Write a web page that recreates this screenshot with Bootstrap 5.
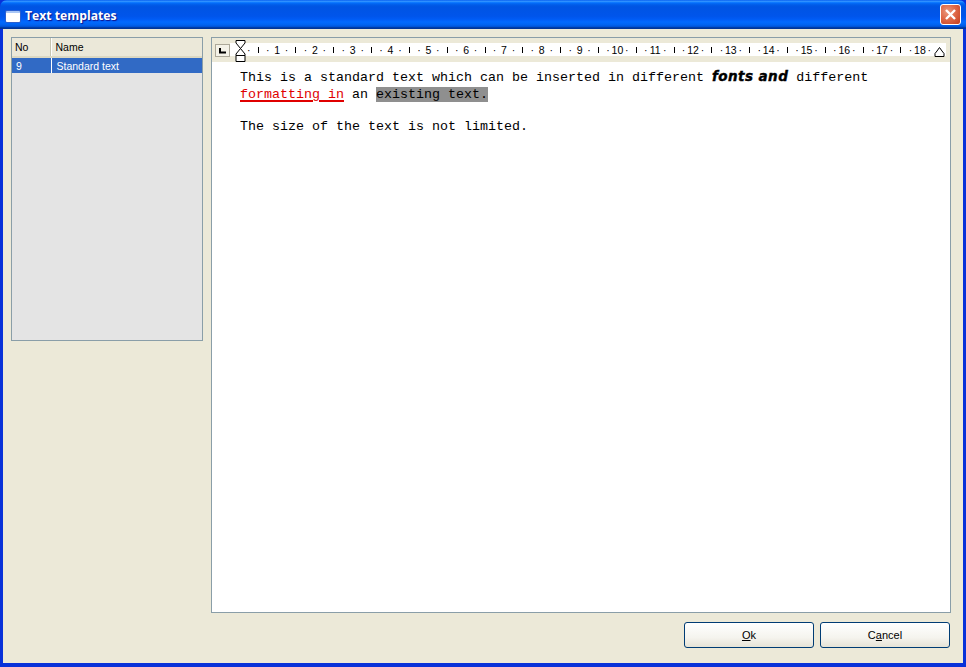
<!DOCTYPE html>
<html lang="en">
<head>
<meta charset="utf-8">
<title>Text templates</title>
<link href="https://cdn.jsdelivr.net/npm/bootstrap@5.3.0/dist/css/bootstrap.min.css" rel="stylesheet">
<style>
html,body{height:100%;margin:0}
body{background:#0831d9;font-family:"Liberation Sans",sans-serif;font-size:11px;color:#000;overflow:hidden}
.xp-window{width:966px;height:667px;background:#0831d9;border-radius:7px 7px 0 0;overflow:hidden}
.xp-title{height:29px;padding:3px 4px 0 6px;background:linear-gradient(180deg,#0058ee 0,#3593ff 4%,#288eff 6%,#127dff 8%,#036ffc 10%,#0262ee 14%,#0057e5 20%,#0054e3 24%,#0055eb 56%,#005bf5 66%,#026afe 76%,#0062ef 86%,#0052d6 92%,#0040ab 94%,#003092 100%)}
.xp-title-text{font-family:"Open Sans",sans-serif;font-weight:700;font-size:12.2px;color:#fff;text-shadow:1px 1px 1px #0f1089;margin-left:5px}
.xp-appicon{width:14px;height:11px;background:#fff;border-top:2px solid #a9c6f5;border-radius:1px;box-shadow:0 0 0 1px #2a5fd0}
.xp-close{width:21px;height:21px;margin-top:-4px;margin-right:1px;border:1px solid #fff;border-radius:3px;background:radial-gradient(circle at 35% 35%,#ea9a80 0,#df6a49 45%,#c53c1c 100%)}
.xp-client{flex:1 1 0;min-height:0;margin:0 3px 4px 3px;background:#ece9d8;padding:8px 12px 15px 8px}
.xp-leftpane{width:192px;height:304px;border:1px solid #8a9ea8;background:#e4e4e4;flex:none}
.xp-grid{width:100%;margin:0;font-size:10.5px;border-collapse:collapse;table-layout:fixed}
.xp-grid th{height:19px;padding:2px 0 1px 3px;font-weight:400;line-height:15px;background:#ebe8d9;border-bottom:2px solid #dcd8c2;border-right:1px solid #fff;box-shadow:inset -1px 0 0 #c7c5b2}
.xp-grid td{height:15px;padding:1px 0 0 4px;color:#fff;background:#316ac5;border-right:1px solid #fff;line-height:14px}
.xp-grid th+th{padding-left:4px}
.xp-grid td+td{padding-left:5px}
.xp-grid .xp-c1{width:39px}
.xp-grid tr>*:last-child{border-right:0;box-shadow:none}
.xp-editor{flex:1 1 0;min-width:0;border:1px solid #8a9ea8;background:#fff}
.xp-ruler{height:24px;background:#ece9d8;padding:5px 0 5px 3px;position:relative;flex:none}
.xp-tabbtn{width:15px;height:13px;background:#f4f2e8;border:1px solid #aca899;margin-top:1px;flex:none;position:relative;z-index:1}
.xp-strip{flex:1 1 0;height:13px;background:#fff;padding-left:14px;font-size:10.5px;line-height:14px;color:#000;margin-top:0;overflow:hidden;margin-right:4px}
.xp-u{width:9.455px;flex:none;text-align:center;white-space:nowrap;display:flex;justify-content:center}
.xp-bar{display:block;width:1px;height:6px;background:#000;margin-top:4px}
.xp-m1{position:absolute;left:23px;top:2px}
.xp-m2{position:absolute;left:722px;top:9px}
.xp-doc{flex:1 1 0;padding:6px 28px;font-family:"Liberation Mono",monospace;font-size:13.33px;line-height:17px;color:#000}
.xp-doc p{margin:0 0 15px;white-space:nowrap}
.xp-heavy{font-family:"DejaVu Sans",sans-serif;font-weight:700;font-style:italic;font-size:13.5px;letter-spacing:.45px;-webkit-text-stroke:.4px #000}
.xp-red{color:#e00000;text-decoration-line:underline;text-decoration-color:#e00000;text-decoration-thickness:2px;text-underline-offset:2px}
.xp-hl{background:#8f8f8f}
.xp-btn{width:130px;height:26px;padding:0;font-family:"Liberation Sans",sans-serif;font-size:11px;line-height:24px;color:#000;background:linear-gradient(180deg,#fff 0,#f5f4ee 60%,#e6e3d6 100%);border:1px solid #003c74;border-radius:3px}
.xp-btn:hover{background:#f5f4ee;color:#000;border-color:#003c74}
.xp-foot{padding-top:9px;padding-right:1px;gap:6px}
</style>
</head>
<body>
<div class="xp-window d-flex flex-column">
  <div class="xp-title d-flex align-items-center flex-none">
    <span class="xp-appicon d-block"></span>
    <span class="xp-title-text flex-grow-1">Text templates</span>
    <span class="xp-close d-flex align-items-center justify-content-center">
      <svg width="13" height="13" viewBox="0 0 13 13"><path d="M2 2 L11 11 M11 2 L2 11" stroke="#fff" stroke-width="2.4" fill="none"/></svg>
    </span>
  </div>
  <div class="xp-client d-flex flex-column">
    <div class="d-flex flex-grow-1 gap-2" style="min-height:0">
      <div class="xp-leftpane">
        <table class="xp-grid">
          <thead><tr><th class="xp-c1">No</th><th>Name</th></tr></thead>
          <tbody><tr><td>9</td><td>Standard text</td></tr></tbody>
        </table>
      </div>
      <div class="xp-editor d-flex flex-column">
        <div class="xp-ruler d-flex">
          <span class="xp-tabbtn d-flex align-items-center justify-content-center">
            <svg width="7" height="6" viewBox="0 0 7 6"><path d="M1 0V4.500H7" stroke="#000" stroke-width="2" fill="none"/></svg>
          </span>
          <div class="xp-strip d-flex">
            <span class="xp-u">·</span><span class="xp-u"><i class="xp-bar"></i></span><span class="xp-u">·</span><span class="xp-u">1</span>
            <span class="xp-u">·</span><span class="xp-u"><i class="xp-bar"></i></span><span class="xp-u">·</span><span class="xp-u">2</span>
            <span class="xp-u">·</span><span class="xp-u"><i class="xp-bar"></i></span><span class="xp-u">·</span><span class="xp-u">3</span>
            <span class="xp-u">·</span><span class="xp-u"><i class="xp-bar"></i></span><span class="xp-u">·</span><span class="xp-u">4</span>
            <span class="xp-u">·</span><span class="xp-u"><i class="xp-bar"></i></span><span class="xp-u">·</span><span class="xp-u">5</span>
            <span class="xp-u">·</span><span class="xp-u"><i class="xp-bar"></i></span><span class="xp-u">·</span><span class="xp-u">6</span>
            <span class="xp-u">·</span><span class="xp-u"><i class="xp-bar"></i></span><span class="xp-u">·</span><span class="xp-u">7</span>
            <span class="xp-u">·</span><span class="xp-u"><i class="xp-bar"></i></span><span class="xp-u">·</span><span class="xp-u">8</span>
            <span class="xp-u">·</span><span class="xp-u"><i class="xp-bar"></i></span><span class="xp-u">·</span><span class="xp-u">9</span>
            <span class="xp-u">·</span><span class="xp-u"><i class="xp-bar"></i></span><span class="xp-u">·</span><span class="xp-u">10</span>
            <span class="xp-u">·</span><span class="xp-u"><i class="xp-bar"></i></span><span class="xp-u">·</span><span class="xp-u">11</span>
            <span class="xp-u">·</span><span class="xp-u"><i class="xp-bar"></i></span><span class="xp-u">·</span><span class="xp-u">12</span>
            <span class="xp-u">·</span><span class="xp-u"><i class="xp-bar"></i></span><span class="xp-u">·</span><span class="xp-u">13</span>
            <span class="xp-u">·</span><span class="xp-u"><i class="xp-bar"></i></span><span class="xp-u">·</span><span class="xp-u">14</span>
            <span class="xp-u">·</span><span class="xp-u"><i class="xp-bar"></i></span><span class="xp-u">·</span><span class="xp-u">15</span>
            <span class="xp-u">·</span><span class="xp-u"><i class="xp-bar"></i></span><span class="xp-u">·</span><span class="xp-u">16</span>
            <span class="xp-u">·</span><span class="xp-u"><i class="xp-bar"></i></span><span class="xp-u">·</span><span class="xp-u">17</span>
            <span class="xp-u">·</span><span class="xp-u"><i class="xp-bar"></i></span><span class="xp-u">·</span><span class="xp-u">18</span>
            <span class="xp-u">·</span>
          </div>
          <svg class="xp-m1" width="11" height="23" viewBox="0 0 11 23"><path d="M1 .5H10V3L5.500 8.500 10 14V15.500H1V14L5.500 8.500 1 3Z M1 15.500H10V21.500H1Z" fill="#fff" stroke="#000"/></svg>
          <svg class="xp-m2" width="11" height="10" viewBox="0 0 11 10"><path d="M5.500 .5 8 4 10 6.500V9.500H1V6.500L3 4Z" fill="#fff" stroke="#000"/></svg>
        </div>
        <div class="xp-doc">
          <p>This is a standard text which can be inserted in different <span class="xp-heavy">fonts and</span> different<br><span class="xp-red">formatting in</span> an <span class="xp-hl">existing text.</span></p>
          <p>The size of the text is not limited.</p>
        </div>
      </div>
    </div>
    <div class="xp-foot d-flex justify-content-end flex-none">
      <button type="button" class="btn xp-btn"><u>O</u>k</button>
      <button type="button" class="btn xp-btn">C<u>a</u>ncel</button>
    </div>
  </div>
</div>
<script src="https://cdn.jsdelivr.net/npm/bootstrap@5.3.0/dist/js/bootstrap.bundle.min.js"></script>
</body>
</html>
